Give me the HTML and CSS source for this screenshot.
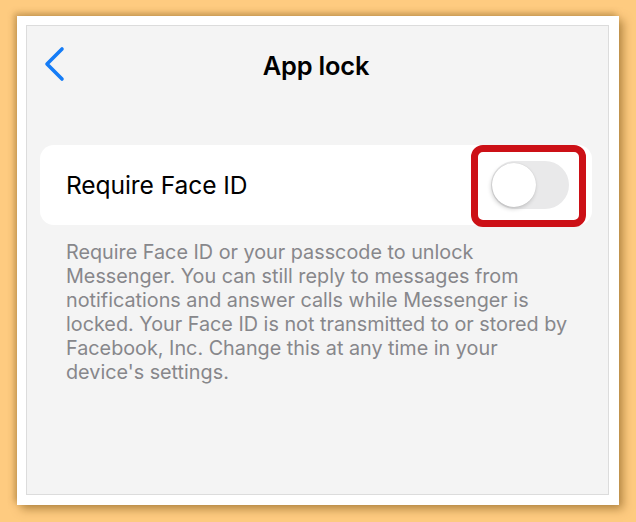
FILE: index.html
```html
<!DOCTYPE html>
<html>
<head>
<meta charset="utf-8">
<link rel="stylesheet" href="styles.css">
</head>
<body>
<div class="frame">
  <div class="panel">
    <div class="header">
      <svg class="back" width="24" height="36" viewBox="0 0 24 36">
        <polyline points="19,3 4,18 19,33" fill="none" stroke="#157CF6" stroke-width="3.6" stroke-linecap="round" stroke-linejoin="round"/>
      </svg>
      <div class="title">App lock</div>
    </div>
    <div class="card">
      <div class="label">Require Face ID</div>
      <div class="toggle"><div class="knob"></div></div>
      <div class="highlight"></div>
    </div>
    <p class="desc">Require Face ID or your passcode to unlock<br>Messenger. You can still reply to messages from<br>notifications and answer calls while Messenger is<br>locked. Your Face ID is not transmitted to or stored by<br>Facebook, Inc. Change this at any time in your<br>device's settings.</p>
  </div>
</div>
</body>
</html>
```
FILE: styles.css
```css
html, body {
  margin: 0;
  padding: 0;
}
body {
  background: #FECB80;
  width: 636px;
  height: 522px;
  overflow: hidden;
  font-family: Inter, "Noto Sans", sans-serif;
}
.frame {
  margin: 16px 0 0 17px;
  width: 602px;
  height: 489px;
  box-sizing: border-box;
  background: #fff;
  padding: 9px 10px 10px 9px;
  box-shadow: -3px -3px 6px rgba(120, 80, 20, 0.35), 4px 4px 9px rgba(110, 70, 10, 0.5);
}
.panel {
  height: 100%;
  box-sizing: border-box;
  border: 1px solid #DCDCDC;
  background: #F4F4F4;
  padding: 0 16px 0 13px;
}
.header {
  position: relative;
  height: 76px;
  display: flex;
  align-items: center;
  justify-content: center;
}
.back {
  position: absolute;
  left: 3px;
  top: 20px;
}
.title {
  font-size: 25.4px;
  font-weight: 600;
  color: #000;
  letter-spacing: -0.2px;
  margin-top: 2px;
}
.card {
  position: relative;
  margin-top: 43px;
  height: 80px;
  background: #fff;
  border-radius: 14px;
  display: flex;
  align-items: center;
  justify-content: space-between;
  padding: 0 23px 0 26px;
}
.label {
  font-size: 24.6px;
  color: #000;
  letter-spacing: -0.1px;
}
.toggle {
  width: 78px;
  height: 48px;
  border-radius: 24px;
  background: #E9E9EA;
  position: relative;
}
.knob {
  position: absolute;
  left: 1px;
  top: 2px;
  width: 44px;
  height: 44px;
  border-radius: 50%;
  background: #fff;
  box-shadow: -1px 2px 4px rgba(0, 0, 0, 0.18), 0 0 1px rgba(0, 0, 0, 0.15);
}
.highlight {
  position: absolute;
  left: 431px;
  top: 0;
  width: 115px;
  height: 82px;
  box-sizing: border-box;
  border: 7px solid #CC1016;
  border-radius: 12px;
}
.desc {
  margin: 15px 0 0 26px;
  font-size: 19.8px;
  line-height: 24px;
  color: #87878B;
}
```
